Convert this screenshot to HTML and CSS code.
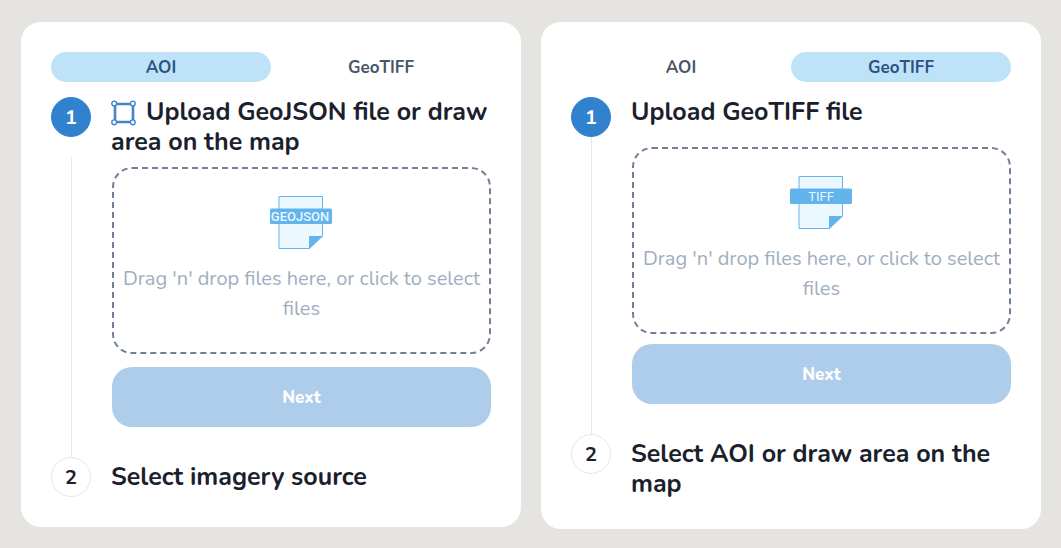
FILE: index.html
```html
<!DOCTYPE html>
<html lang="en">
<head>
<meta charset="utf-8">
<title>Upload</title>
<link rel="stylesheet" href="styles.css">
</head>
<body>
<main class="board">
  <section class="card">
    <nav class="tabs">
      <button class="tab tab-active" type="button">AOI</button>
      <button class="tab" type="button">GeoTIFF</button>
    </nav>
    <ol class="steps">
      <li class="step">
        <div class="rail"><span class="marker marker-active">1</span><span class="line line-spaced"></span></div>
        <div class="content">
          <h2 class="title"><svg class="area-icon" width="26" height="26" viewBox="0 0 26 26" fill="none" stroke="#4285cc"><path d="M4 4H22V22H4Z" stroke-width="2.6"/><g fill="#fff" stroke-width="1.4"><circle cx="3.2" cy="3.5" r="2.4"/><circle cx="21.8" cy="3.5" r="2.4"/><circle cx="3.2" cy="22.3" r="2.4"/><circle cx="21.8" cy="22.3" r="2.4"/></g></svg>Upload GeoJSON file or draw area on the map</h2>
          <label class="drop">
            <input class="file" type="file">
            <svg width="64" height="54" viewBox="0 0 64 54"><path d="M9 .5H52.5V40L39.5 52.5H9Z" fill="#ebf8ff" stroke="#63b3ed"/><path d="M39 53V40H53Z" fill="#63b3ed"/><rect y="12.500" width="62" height="15.500" rx="1.500" fill="#63b3ed"/><text class="badge badge-bold" x="30" y="25" text-anchor="middle">GEOJSON</text></svg>
            <span class="hint">Drag 'n' drop files here, or click to select files</span>
          </label>
          <button class="next" type="button">Next</button>
        </div>
      </li>
      <li class="step">
        <div class="rail"><span class="marker">2</span></div>
        <div class="content content-last"><h2 class="title">Select imagery source</h2></div>
      </li>
    </ol>
  </section>

  <section class="card">
    <nav class="tabs">
      <button class="tab" type="button">AOI</button>
      <button class="tab tab-active" type="button">GeoTIFF</button>
    </nav>
    <ol class="steps">
      <li class="step">
        <div class="rail"><span class="marker marker-active">1</span><span class="line"></span></div>
        <div class="content">
          <h2 class="title">Upload GeoTIFF file</h2>
          <label class="drop drop-low">
            <input class="file" type="file">
            <svg width="64" height="54" viewBox="0 0 64 54"><path d="M9 .5H52.5V40L39.5 52.5H9Z" fill="#ebf8ff" stroke="#63b3ed"/><path d="M39 53V40H53Z" fill="#63b3ed"/><rect y="12.500" width="62" height="15.500" rx="1.500" fill="#63b3ed"/><text class="badge" x="31" y="25" text-anchor="middle">TIFF</text></svg>
            <span class="hint">Drag 'n' drop files here, or click to select files</span>
          </label>
          <button class="next" type="button">Next</button>
        </div>
      </li>
      <li class="step">
        <div class="rail"><span class="marker">2</span></div>
        <div class="content content-last"><h2 class="title">Select AOI or draw area on the map</h2></div>
      </li>
    </ol>
  </section>
</main>
</body>
</html>
```
FILE: styles.css
```css
* { box-sizing: border-box; }
body {
  margin: 0;
  background: #e5e4e0;
  color: #1a202c;
  font-family: "Nunito", Lato, sans-serif;
}
button { font: inherit; border: 0; cursor: pointer; }
.board {
  display: grid;
  grid-template-columns: 1fr 1fr;
  align-items: start;
  gap: 20px;
  padding: 22px 20px 19px 21px;
}
.card {
  background: #fff;
  border-radius: 20px;
  padding: 30px;
}
.tabs { display: flex; margin-bottom: 15px; }
.tab {
  flex: 1;
  height: 30px;
  padding: 0;
  border-radius: 15px;
  background: transparent;
  color: #4a5568;
  font-size: 17px;
  font-weight: 700;
}
.tab-active { background: #bee3f8; color: #2c5282; }
.steps { list-style: none; margin: 0; padding: 0; }
.step { display: flex; gap: 20px; }
.rail { display: flex; flex-direction: column; align-items: center; }
.marker {
  display: flex;
  align-items: center;
  justify-content: center;
  width: 40px;
  height: 40px;
  border: 1px solid #e2e8f0;
  border-radius: 50%;
  font-size: 20px;
  font-weight: 700;
}
.marker-active { background: #3182ce; border-color: #3182ce; color: #fff; }
.line { flex: 1; width: 1px; background: #e2e8f0; }
.line-spaced { margin-top: 20px; }
.content {
  flex: 1;
  min-width: 0;
  display: flex;
  flex-direction: column;
  padding-bottom: 30px;
}
.content-last { padding: 5px 0 0; }
.title { margin: 0; font-size: 25px; line-height: 30px; font-weight: 700; }
.area-icon { margin-right: 9px; vertical-align: -6px; }
.drop {
  display: flex;
  flex-direction: column;
  align-items: center;
  gap: 14px;
  margin: 10px 0 13px 1px;
  padding: 27px 8px 28px;
  border: 2px dashed #718096;
  border-radius: 20px;
  cursor: pointer;
}
.drop-low { margin: 20px 0 10px 1px; }
.file { display: none; }
.badge { font: 400 13px Roboto, sans-serif; fill: #ebf8ff; }
.badge-bold { font-weight: 500; }
.hint { color: #a0aec0; font-size: 20px; line-height: 30px; text-align: center; }
.next {
  height: 60px;
  margin-left: 1px;
  border-radius: 20px;
  background: #aecdea;
  color: #fff;
  font-size: 17px;
  font-weight: 800;
}
```
